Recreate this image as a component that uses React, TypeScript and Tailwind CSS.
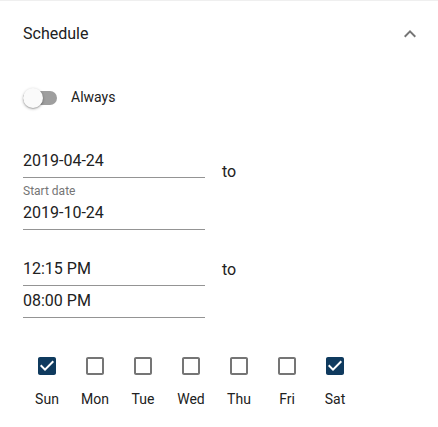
import { useState } from "react";

const days = [
  { label: "Sun", checked: true },
  { label: "Mon", checked: false },
  { label: "Tue", checked: false },
  { label: "Wed", checked: false },
  { label: "Thu", checked: false },
  { label: "Fri", checked: false },
  { label: "Sat", checked: true },
];

function Field({ value, top = "pt-[6px]" }: { value: string; top?: string }) {
  return (
    <div className={`w-[182px] ${top} pb-[7px] border-b border-[#949494]`}>
      <div className="h-[19px] leading-[19px] text-[16px] text-[#212121]">{value}</div>
    </div>
  );
}

function DayBox({ label, checked }: { label: string; checked: boolean }) {
  return (
    <div className="w-[48px] flex flex-col items-center">
      {checked ? (
        <svg viewBox="0 0 24 24" className="w-[24px] h-[24px] fill-[#0f3a5e]">
          <rect x="5" y="5" width="14" height="14" fill="#fff" />
          <path d="M19 3H5c-1.11 0-2 .9-2 2v14c0 1.1.89 2 2 2h14c1.11 0 2-.9 2-2V5c0-1.1-.89-2-2-2zm-9 14l-5-5 1.41-1.41L10 14.17l7.59-7.59L19 8l-9 9z" />
        </svg>
      ) : (
        <svg viewBox="0 0 24 24" className="w-[24px] h-[24px] fill-[#757575]">
          <path d="M19 5v14H5V5h14m0-2H5c-1.1 0-2 .9-2 2v14c0 1.1.9 2 2 2h14c1.1 0 2-.9 2-2V5c0-1.1-.9-2-2-2z" />
        </svg>
      )}
      <span className="mt-[11px] h-[20px] leading-[20px] text-[14px] text-[#212121]">{label}</span>
    </div>
  );
}

export default function App() {
  const [always] = useState(false);

  return (
    <div className="w-[438px] h-[427px] bg-white border-t border-[#efefef] font-['Roboto','Liberation_Sans',sans-serif] overflow-hidden">
      <div className="h-[64px] pt-[2px] flex items-center justify-between pl-[23px] pr-[16px]">
        <span className="text-[16px] text-[#212121]">Schedule</span>
        <svg viewBox="0 0 24 24" className="w-[24px] h-[24px] fill-[#757575]">
          <path d="M12 8l-6 6 1.41 1.41L12 10.83l4.59 4.58L18 14z" />
        </svg>
      </div>

      <div className="px-[23px]">
        <div className="mt-[22px] flex items-center gap-[14px]">
          <div className="relative w-[34px] h-[20px]">
            <div className={`absolute left-0 right-0 top-[3px] h-[14px] rounded-full ${always ? "bg-[#0f3a5e]/50" : "bg-[#9e9e9e]"}`} />
            <div className="absolute left-0 top-0 w-[20px] h-[20px] rounded-full bg-[#fafafa] shadow-[0_1px_3px_rgba(0,0,0,0.3),0_1px_1px_rgba(0,0,0,0.14)]" />
          </div>
          <span className="text-[14px] text-[#212121]">Always</span>
        </div>

        <div className="mt-[37px] flex">
          <div className="flex flex-col">
            <Field value="2019-04-24" />
            <div className="mt-[6px] h-[14px] leading-[14px] text-[12px] text-[#757575]">Start date</div>
            <Field value="2019-10-24" top="pt-[5px]" />
          </div>
          <span className="ml-[17px] mt-[17px] h-[19px] leading-[19px] text-[16px] text-[#212121]">to</span>
        </div>

        <div className="mt-[23px] flex">
          <div className="flex flex-col">
            <Field value="12:15 PM" />
            <Field value="08:00 PM" top="pt-[5px]" />
          </div>
          <span className="ml-[17px] mt-[7px] h-[19px] leading-[19px] text-[16px] text-[#212121]">to</span>
        </div>

        <div className="mt-[36px] flex">
          {days.map((d) => (
            <DayBox key={d.label} label={d.label} checked={d.checked} />
          ))}
        </div>
      </div>
    </div>
  );
}
